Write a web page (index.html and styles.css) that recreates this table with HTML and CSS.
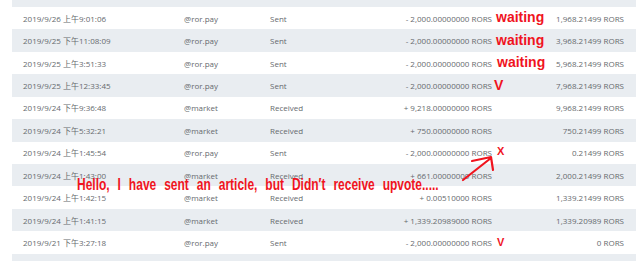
FILE: index.html
```html
<!DOCTYPE html>
<html>
<head>
<meta charset="utf-8">
<link rel="stylesheet" href="styles.css">
</head>
<body>
<div class="table">
  <div class="row gray cut"></div>
  <div class="row"><span>2019/9/26 上午9:01:06</span><span>@ror.pay</span><span>Sent</span><span class="amt">- 2,000.00000000 RORS<b class="note waiting">waiting</b></span><span class="bal">1,968.21499 RORS</span></div>
  <div class="row gray"><span>2019/9/25 下午11:08:09</span><span>@ror.pay</span><span>Sent</span><span class="amt">- 2,000.00000000 RORS<b class="note waiting">waiting</b></span><span class="bal">3,968.21499 RORS</span></div>
  <div class="row"><span>2019/9/25 上午3:51:33</span><span>@ror.pay</span><span>Sent</span><span class="amt">- 2,000.00000000 RORS<b class="note waiting w3">waiting</b></span><span class="bal">5,968.21499 RORS</span></div>
  <div class="row gray"><span>2019/9/25 上午12:33:45</span><span>@ror.pay</span><span>Sent</span><span class="amt">- 2,000.00000000 RORS<b class="note vbig">V</b></span><span class="bal">7,968.21499 RORS</span></div>
  <div class="row"><span>2019/9/24 下午9:36:48</span><span>@market</span><span>Received</span><span class="amt">+ 9,218.00000000 RORS</span><span class="bal">9,968.21499 RORS</span></div>
  <div class="row gray"><span>2019/9/24 下午5:32:21</span><span>@market</span><span>Received</span><span class="amt">+ 750.00000000 RORS</span><span class="bal">750.21499 RORS</span></div>
  <div class="row"><span>2019/9/24 上午1:45:54</span><span>@ror.pay</span><span>Sent</span><span class="amt">- 2,000.00000000 RORS<b class="note xsmall">X</b></span><span class="bal">0.21499 RORS</span></div>
  <div class="row gray"><span>2019/9/24 上午1:43:00</span><span>@market</span><span>Received</span><span class="amt">+ 661.00000000 RORS</span><span class="bal">2,000.21499 RORS</span></div>
  <div class="row"><span>2019/9/24 上午1:42:15</span><span>@market</span><span>Received</span><span class="amt">+ 0.00510000 RORS</span><span class="bal">1,339.21499 RORS</span></div>
  <div class="row gray"><span>2019/9/24 上午1:41:15</span><span>@market</span><span>Received</span><span class="amt">+ 1,339.20989000 RORS</span><span class="bal">1,339.20989 RORS</span></div>
  <div class="row"><span>2019/9/21 下午3:27:18</span><span>@ror.pay</span><span>Sent</span><span class="amt">- 2,000.00000000 RORS<b class="note vsmall">V</b></span><span class="bal">0 RORS</span></div>
  <div class="row gray last"></div>

  <svg class="arrow" width="640" height="261" viewBox="0 0 640 261">
    <path d="M463 180 L491 158 M472 161 L491 157 L493 170" fill="none" stroke="#f0141e" stroke-width="2.2" stroke-linecap="round" stroke-linejoin="round"/>
  </svg>
  <div class="message">Hello, I have sent an article, but Didn′t receive upvote.....</div>
</div>
</body>
</html>
```
FILE: styles.css
```css
html, body {
  margin: 0;
  padding: 0;
  background: #ffffff;
  overflow: hidden;
}
body {
  width: 640px;
  height: 261px;
  font-family: "Open Sans", "Noto Sans CJK JP", sans-serif;
}
.table {
  margin-left: 12px;
  width: 624px;
  display: flex;
  flex-direction: column;
}
.row {
  height: 22.43px;
  flex: none;
  display: grid;
  grid-template-columns: 161px 86px 100px 122px 132px;
  align-items: center;
  padding: 0 12px 0 11px;
  font-size: 8px;
  color: #666a6e;
  white-space: nowrap;
}
.row.cut {
  height: 7px;
}
.row.last {
  height: 8px;
}
.gray {
  background: #e9edf1;
}
.amt, .bal {
  text-align: right;
}
.amt {
  position: relative;
}
.note {
  position: absolute;
  left: calc(100% + 4px);
  top: 50%;
  color: #f0141e;
  font-family: "Liberation Sans", Arial, sans-serif;
  font-weight: bold;
  line-height: 1;
}
.waiting {
  font-size: 14px;
  transform: translateY(-58%);
}
.w3 {
  left: calc(100% + 5px);
}
.vbig {
  font-size: 14px;
  left: calc(100% + 2px);
  transform: translateY(-48%);
}
.xsmall {
  font-size: 11px;
  left: calc(100% + 5px);
  transform: translateY(-62%);
}
.vsmall {
  font-size: 11px;
  left: calc(100% + 5px);
  transform: translateY(-50%);
}
.arrow {
  position: absolute;
  left: 0;
  top: 0;
  pointer-events: none;
}
.message {
  position: absolute;
  left: 77px;
  top: 175px;
  font-family: "Liberation Sans", Arial, sans-serif;
  font-weight: bold;
  font-size: 12px;
  line-height: 15px;
  color: #f0141e;
  word-spacing: 4.6px;
  white-space: nowrap;
  transform: scaleY(1.38);
  transform-origin: left top;
}
```
